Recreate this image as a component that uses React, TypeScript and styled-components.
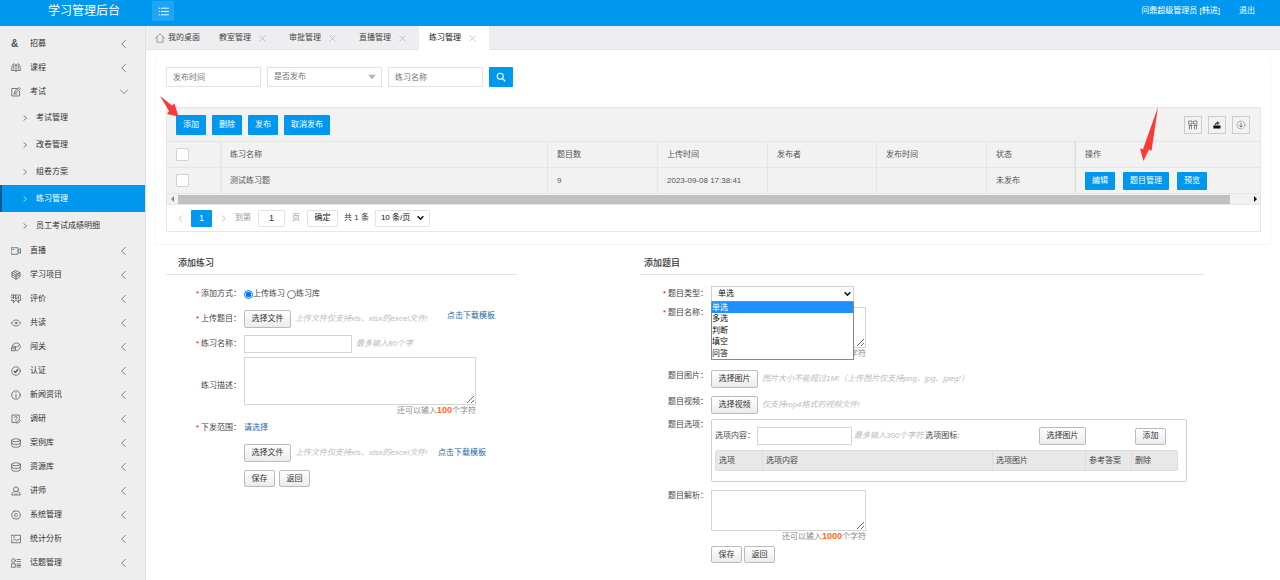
import React from "react";
import styled, { createGlobalStyle, css } from "styled-components";

const BLUE = "#0098ee";

const GlobalStyle = createGlobalStyle`
  *, *::before, *::after { box-sizing: border-box; }
  body {
    margin: 0;
    background: #fff;
    color: #444;
    font: 8px/12px "Liberation Sans", "Noto Sans CJK SC", sans-serif;
  }
  button, input, select, textarea {
    font: inherit;
    color: inherit;
    margin: 0;
    border-radius: 0;
  }
  button { cursor: pointer; white-space: nowrap; }
  a { text-decoration: none; color: inherit; }
  svg { display: block; flex: none; }
`;

/* ---------- Shell ---------- */

const Header = styled.header`
  display: flex;
  align-items: center;
  height: 26px;
  padding: 0 25px 4px 0;
  background: ${BLUE};
  color: #fff;
`;

const Brand = styled.h1`
  width: 152px;
  margin: 0;
  padding-left: 16px;
  text-align: center;
  font-size: 12px;
  line-height: 20px;
  font-weight: 400;
`;

const MenuToggle = styled.button`
  display: flex;
  align-items: center;
  justify-content: center;
  width: 22px;
  height: 20px;
  padding: 0;
  border: 0;
  border-radius: 1px;
  background: #1fa5f3;
  color: #fff;
`;

const UserLinks = styled.nav`
  display: flex;
  gap: 19px;
  margin-left: auto;
`;

const Body = styled.div`
  display: flex;
  align-items: stretch;
  min-height: calc(100vh - 26px);
`;

const Sidebar = styled.nav`
  flex: none;
  width: 146px;
  padding-top: 6px;
  background: #eee;
  border-right: 1px solid #e0e0e0;
  color: #333;
`;

const MenuItem = styled.a`
  display: flex;
  align-items: center;
  height: 24px;
  padding: 0 17px 0 11px;
`;

const MenuIcon = styled.span`
  display: flex;
  align-items: center;
  width: 19px;
  color: #555;
`;

const Ampersand = styled.span`
  font-size: 10px;
  font-weight: 700;
`;

const MenuText = styled.span`
  flex: 1;
`;

const SubItem = styled.a<{ $active?: boolean }>`
  display: flex;
  align-items: center;
  gap: 8px;
  height: 27px;
  padding-left: 20px;
  border-left: 2px solid transparent;
  ${(p) =>
    p.$active &&
    css`
      background: ${BLUE};
      border-left-color: #0a5c94;
      color: #fff;
    `}
`;

const Main = styled.main`
  flex: 1;
  min-width: 0;
`;

const TabBar = styled.nav`
  display: flex;
  height: 24px;
  background: #eeeef0;
  border-bottom: 1px solid #e4e4e4;
`;

const Tab = styled.a<{ $active?: boolean; $home?: boolean }>`
  display: flex;
  align-items: center;
  gap: ${(p) => (p.$home ? 3 : 8)}px;
  width: ${(p) => (p.$home ? 63 : 70)}px;
  height: 24px;
  padding-left: ${(p) => (p.$home ? 9 : 10)}px;
  white-space: nowrap;
  ${(p) =>
    p.$active &&
    css`
      background: #fff;
      color: #111;
    `}
`;

/* ---------- List card ---------- */

const Card = styled.section`
  margin: 9px 9px 0;
  padding: 7px 9px 12px 10px;
  border: 1px solid #f6f6f6;
  border-top-color: #fff;
`;

const Filters = styled.form`
  display: flex;
  gap: 6px;
  margin-bottom: 20px;
`;

const FilterInput = styled.input`
  width: 95px;
  height: 20px;
  padding: 0 6px;
  border: 1px solid #e3e3e3;
  &::placeholder { color: #757575; }
`;

const SelectWrap = styled.span`
  position: relative;
  display: inline-flex;
  & > svg {
    position: absolute;
    right: 6px;
    top: 50%;
    transform: translateY(-50%);
    pointer-events: none;
  }
`;

const FilterSelect = styled.select`
  appearance: none;
  width: 115px;
  height: 20px;
  padding: 0 6px;
  border: 1px solid #e3e3e3;
  background: #fff;
  color: #757575;
`;

const PrimaryButton = styled.button<{ $slim?: boolean }>`
  display: inline-flex;
  align-items: center;
  justify-content: center;
  height: ${(p) => (p.$slim ? 18 : 20)}px;
  padding: 0 7px;
  border: 0;
  border-radius: 1px;
  background: ${BLUE};
  color: #fff;
`;

const GridBox = styled.div`
  border: 1px solid #e6e6e6;
`;

const Toolbar = styled.div`
  display: flex;
  align-items: center;
  gap: 6px;
  height: 33px;
  padding: 0 10px 0 9px;
  background: #f2f2f2;
`;

const ToolIcons = styled.div`
  display: flex;
  gap: 6px;
  margin-left: auto;
`;

const ToolButton = styled.button`
  display: flex;
  align-items: center;
  justify-content: center;
  width: 18px;
  height: 18px;
  padding: 0;
  border: 1px solid #ccc;
  background: transparent;
  color: #555;
`;

const Anchor = styled.span`
  position: relative;
  display: inline-flex;
`;

const Pointer = styled.svg<{ $right: number; $bottom: number }>`
  position: absolute;
  right: ${(p) => p.$right}px;
  bottom: ${(p) => p.$bottom}px;
  overflow: visible;
  pointer-events: none;
`;

const DataTable = styled.table`
  width: 100%;
  table-layout: fixed;
  border-collapse: separate;
  border-spacing: 0;
  background: #f2f2f2;
  color: #555;
  th, td {
    height: 26px;
    padding: 0 9px;
    border-top: 1px solid #e6e6e6;
    border-right: 1px solid #e6e6e6;
    font-weight: 400;
    text-align: left;
    white-space: nowrap;
  }
  th:last-child, td:last-child { border-right: 0; box-shadow: -2px 0 2px rgba(0, 0, 0, 0.05); }
  th:first-child, td:first-child { box-shadow: 1px 0 2px rgba(0, 0, 0, 0.05); }
`;

const CheckBox = styled.input`
  appearance: none;
  display: block;
  width: 13px;
  height: 13px;
  border: 1px solid #d2d2d2;
  border-radius: 1px;
  background: #fff;
`;

const RowActions = styled.div`
  display: flex;
  gap: 8px;
`;

const ScrollTrack = styled.div`
  display: flex;
  align-items: center;
  height: 12px;
  padding: 0 3px 0 4px;
  background: #f1f1f1;
  border-top: 1px solid #e6e6e6;
  border-bottom: 1px solid #e6e6e6;
`;

const ScrollRail = styled.div`
  flex: 1;
  height: 9px;
  margin: 0 24px 0 4px;
  background: #c1c1c1;
`;

const Pager = styled.div`
  display: flex;
  align-items: center;
  height: 26px;
  padding-left: 10px;
  color: #333;
`;

const PageArrow = styled.button`
  display: flex;
  align-items: center;
  justify-content: center;
  width: 6px;
  height: 17px;
  padding: 0;
  border: 0;
  background: none;
  color: #aaa;
`;

const PageNumber = styled.button`
  width: 21px;
  height: 17px;
  margin: 0 8px;
  padding: 0;
  border: 0;
  border-radius: 1px;
  background: ${BLUE};
  color: #fff;
  font-size: 9px;
`;

const JumpLabel = styled.label`
  display: flex;
  align-items: center;
  gap: 7px;
  margin-left: 9px;
  color: #999;
`;

const JumpInput = styled.input`
  width: 27px;
  height: 17px;
  padding: 0;
  border: 1px solid #e2e2e2;
  border-radius: 1px;
  color: #333;
  font-size: 9px;
  text-align: center;
`;

const JumpButton = styled.button`
  width: 31px;
  height: 17px;
  margin: 0 6px 0 7px;
  padding: 0;
  border: 1px solid #e2e2e2;
  border-radius: 1px;
  background: #fff;
  color: #111;
`;

const PageSize = styled.select`
  appearance: none;
  width: 55px;
  height: 17px;
  margin-left: 6px;
  padding: 0 5px;
  border: 1px solid #e2e2e2;
  border-radius: 1px;
  background: #fff;
  color: #111;
`;

/* ---------- Forms ---------- */

const Forms = styled.div`
  display: grid;
  grid-template-columns: minmax(0, 351fr) minmax(0, 564fr);
  column-gap: 123px;
  padding: 0 76px 8px 20px;
`;

const SectionTitle = styled.h2<{ $indent: number }>`
  margin: 0;
  padding: 12px 0 5px ${(p) => p.$indent}px;
  border-bottom: 1px solid #e3e3e3;
  font-size: 9px;
  line-height: 12px;
  font-weight: 500;
  color: #333;
`;

const FormBody = styled.form`
  display: flex;
  flex-direction: column;
  padding-top: 11px;
`;

const Row = styled.div<{ $gap?: number; $top?: boolean; $label: number }>`
  display: grid;
  grid-template-columns: ${(p) => p.$label}px minmax(0, 1fr);
  column-gap: 3px;
  align-items: ${(p) => (p.$top ? "start" : "center")};
  margin-top: ${(p) => p.$gap ?? 0}px;
`;

const labelStyle = css`
  text-align: right;
  white-space: nowrap;
`;

const Label = styled.label`
  ${labelStyle}
`;

const LabelText = styled.span`
  ${labelStyle}
`;

const Star = styled.span`
  margin-right: 2px;
  color: #f00;
`;

const Field = styled.div<{ $gap?: number }>`
  display: flex;
  align-items: center;
  gap: ${(p) => p.$gap ?? 4}px;
  min-height: 16px;
  white-space: nowrap;
`;

const Choice = styled.label`
  display: inline-flex;
  align-items: center;
`;

const Radio = styled.input`
  width: 9px;
  height: 9px;
  accent-color: #0075ff;
`;

const GreyButton = styled.button<{ $small?: boolean }>`
  flex: none;
  width: ${(p) => (p.$small ? 31 : 47)}px;
  height: ${(p) => (p.$small ? 17 : 18)}px;
  padding: 0;
  border: 1px solid #bbb;
  border-radius: 2px;
  background: linear-gradient(#fff, #ebebeb);
  color: #333;
`;

const Hint = styled.em<{ $w?: number }>`
  color: #bbb;
  width: ${(p) => (p.$w ? `${p.$w}px` : "auto")};
  white-space: nowrap;
`;

const TextLink = styled.a<{ $raised?: boolean }>`
  color: #1c66a3;
  align-self: ${(p) => (p.$raised ? "flex-start" : "center")};
`;

const TextInput = styled.input<{ $w: number }>`
  width: ${(p) => p.$w}px;
  height: 18px;
  padding: 0 4px;
  border: 1px solid #d5d5d5;
`;

const CountedArea = styled.div<{ $w: number }>`
  width: ${(p) => p.$w}px;
`;

const TextArea = styled.textarea<{ $h: number }>`
  display: block;
  width: 100%;
  height: ${(p) => p.$h}px;
  padding: 4px;
  border: 1px solid #d5d5d5;
`;

const Counter = styled.p`
  height: 10px;
  margin: 0;
  text-align: right;
  line-height: 10px;
  color: #888;
  b { color: #ff6a1a; font-size: 9px; font-weight: 700; }
`;

const TypeBox = styled.div`
  position: relative;
  width: 143px;
`;

const TypeSelect = styled.select`
  appearance: none;
  display: block;
  width: 100%;
  height: 16px;
  padding: 0 6px;
  border: 1px solid #d0d0d0;
  border-bottom-color: #888;
  background: #fff;
  color: #111;
`;

const TypeArrow = styled.svg`
  position: absolute;
  right: 3px;
  top: 5px;
  pointer-events: none;
`;

const OptionList = styled.ul`
  position: absolute;
  z-index: 2;
  top: 100%;
  left: 0;
  display: grid;
  grid-auto-rows: 1fr;
  width: 100%;
  height: 58px;
  margin: 0;
  padding: 0;
  list-style: none;
  border: 1px solid #888;
  border-top: 0;
  background: #fff;
  color: #111;
`;

const Option = styled.li<{ $on?: boolean }>`
  line-height: 11px;
  background: ${(p) => (p.$on ? "#1e90ff" : "transparent")};
  color: ${(p) => (p.$on ? "#fff" : "inherit")};
`;

const OptionPanel = styled.div`
  margin-right: 17px;
  padding: 7px 8px 10px 3px;
  border: 1px solid #d0d0d0;
  border-radius: 2px;
`;

const OptionRow = styled.div`
  display: flex;
  align-items: center;
  gap: 2px;
  padding-right: 12px;
  margin-bottom: 5px;
  white-space: nowrap;
`;

const PictureGroup = styled.div`
  display: flex;
  align-items: center;
  gap: 49px;
  margin-left: auto;
`;

const OptionTable = styled.table`
  width: 100%;
  table-layout: fixed;
  border-collapse: separate;
  border-spacing: 0;
  background: #e8e8e8;
  border: 1px solid #ddd;
  border-radius: 2px;
  th {
    height: 19px;
    padding: 0 3px;
    text-align: left;
    font-weight: 400;
    white-space: nowrap;
  }
  th + th { border-left: 1px solid #ddd; }
`;

/* ---------- Icons ---------- */

type IconProps = { children: React.ReactNode; size?: number; width?: number };

const Icon = ({ children, size = 10, width = 1.5 }: IconProps) => (
  <svg
    width={size}
    height={size}
    viewBox="0 0 20 20"
    fill="none"
    stroke="currentColor"
    strokeWidth={width}
    strokeLinecap="round"
    strokeLinejoin="round"
    aria-hidden="true"
  >
    {children}
  </svg>
);

const database = (
  <Icon>
    <ellipse cx="10" cy="4.5" rx="8.5" ry="3" />
    <path d="M1.5 4.5v11c0 1.700 3.800 3 8.500 3s8.500-1.300 8.500-3v-11M1.500 10c0 1.700 3.800 3 8.500 3s8.500-1.300 8.500-3" />
  </Icon>
);

const icons: Record<string, React.ReactNode> = {
  book: (
    <Icon>
      <path d="M10 5c-.5-2-2-3-4-3S2.500 3.500 2.500 5L1 15h7c1 0 2 .5 2 2 0-1.500 1-2 2-2h7L17.500 5c0-1.500-1.500-3-3.500-3s-3.500 1-4 3zM10 5v10M5.500 5v7M14.500 5v7" />
    </Icon>
  ),
  edit: (
    <Icon>
      <path d="M13 3H1.500v15H17V9M5 14h7M7 11l1-3 8.500-7L19 3.500 10 11z" />
    </Icon>
  ),
  video: (
    <Icon>
      <path d="M1 3.500h13v13H1zM14 9l5-4v10l-5-4M3.500 7h2" />
    </Icon>
  ),
  cube: (
    <Icon>
      <path d="M10 1.500l8 4v8.500l-8 4.500-8-4.500V5.500zM2 5.500l8 4.500 8-4.500M10 10v8.500M6 3.500l8 4.500M2 9.500l8 4.500 8-4.500" />
    </Icon>
  ),
  review: (
    <Icon>
      <path d="M1 2h18v11h-5l2 5-5-5H9l-5 5 2-5H1zM5 2v7M9 3v7h3V6M15 5v5M3 7h3" />
    </Icon>
  ),
  eye: (
    <Icon>
      <path d="M1 10c2.500-4 5.500-6 9-6s6.500 2 9 6c-2.500 4-5.500 6-9 6s-6.500-2-9-6z" />
      <circle cx="10" cy="10" r="1.800" />
    </Icon>
  ),
  game: (
    <Icon>
      <path d="M2.500 10C2 5 6 2 10.500 2S18.500 5 18.500 9.500 15 16 11 17.500M6 8l5 2 5-2.500M2 10.500h7v7H2zM4 13.500h3" />
    </Icon>
  ),
  check: (
    <Icon>
      <circle cx="10" cy="10" r="8.500" />
      <path d="M6.500 10.500l2.500 2.500 4.500-6" strokeWidth="2.600" />
    </Icon>
  ),
  info: (
    <Icon>
      <circle cx="10" cy="10" r="8.500" />
      <path d="M10 9v6M10 5.500v.5" />
    </Icon>
  ),
  survey: (
    <Icon>
      <path d="M16.500 9V2H2v15h8M7 7c0-3 5-3 5 0 0 2-2.500 2-2.500 4M9.500 13.500v.2M12 15l5-4 2 2-4.500 5H12z" />
    </Icon>
  ),
  person: (
    <Icon>
      <circle cx="10" cy="6.500" r="5" />
      <path d="M7 11c-3 1-5.500 3-5.500 7h17c0-4-2.500-6-5.500-7M8 15l2 2 2-2" />
    </Icon>
  ),
  gear: (
    <Icon>
      <path d="M10 1.200l2.500 1.600 3-.3.900 2.800 2.400 1.900-1 2.800 1 2.800-2.400 1.900-.9 2.800-3-.3L10 18.800l-2.500-1.600-3 .3-.9-2.800-2.400-1.900 1-2.800-1-2.800 2.400-1.900.9-2.800 3 .3z" />
      <path d="M13 8.500c-1-2.500-5.500-2.500-6 1.500s4.500 4.500 6 1.500" />
    </Icon>
  ),
  image: (
    <Icon>
      <path d="M1 2.500h18v15H1zM3 14l4-4 4 3.500 6-3.500M5 6h2" />
    </Icon>
  ),
  topics: (
    <Icon>
      <circle cx="5" cy="5" r="3.700" />
      <path d="M1.500 11.500h7v7h-7zM12 3h7M12 7h7M12 12h7M12 15h7M12 18h7" />
    </Icon>
  ),
};

const ChevronLeft = () => (
  <Icon size={8} width={1.7}>
    <path d="M14 1L4 10l10 9" stroke="#555" />
  </Icon>
);
const ChevronRight = () => (
  <Icon size={6} width={2}>
    <path d="M6 2l9 8-9 8" />
  </Icon>
);
const ChevronDown = () => (
  <Icon size={8} width={1.7}>
    <path d="M1 5l9 9 9-9" stroke="#555" />
  </Icon>
);
const Close = () => (
  <Icon size={7} width={1.8}>
    <path d="M2 2l16 16M18 2L2 18" stroke="#aaa" />
  </Icon>
);
const BoldChevron = () => (
  <svg width="7" height="6" viewBox="0 0 7 6" fill="none" stroke="#111" strokeWidth="1.6" aria-hidden="true">
    <path d="M0.700 1.300l2.800 2.900 2.800-2.900" />
  </svg>
);

/* ---------- Data ---------- */

type Entry = { icon: string; text: string };

const topMenu: Entry[] = [
  { icon: "amp", text: "招募" },
  { icon: "book", text: "课程" },
  { icon: "edit", text: "考试" },
];

const examMenu = ["考试管理", "改卷管理", "组卷方案", "练习管理", "员工考试成绩明细"];

const restMenu: Entry[] = [
  { icon: "video", text: "直播" },
  { icon: "cube", text: "学习项目" },
  { icon: "review", text: "评价" },
  { icon: "eye", text: "共读" },
  { icon: "game", text: "闯关" },
  { icon: "check", text: "认证" },
  { icon: "info", text: "新闻资讯" },
  { icon: "survey", text: "调研" },
  { icon: "database", text: "案例库" },
  { icon: "database", text: "资源库" },
  { icon: "person", text: "讲师" },
  { icon: "gear", text: "系统管理" },
  { icon: "image", text: "统计分析" },
  { icon: "topics", text: "话题管理" },
];

const tabs = ["教室管理", "审批管理", "直播管理", "练习管理"];
const questionTypes = ["单选", "多选", "判断", "填空", "问答"];

const MenuEntry = ({ icon, text, open }: Entry & { open?: boolean }) => (
  <MenuItem href="#">
    <MenuIcon>
      {icon === "amp" ? <Ampersand>&amp;</Ampersand> : icon === "database" ? database : icons[icon]}
    </MenuIcon>
    <MenuText>{text}</MenuText>
    {open ? <ChevronDown /> : <ChevronLeft />}
  </MenuItem>
);

/* ---------- Page sections ---------- */

const PracticeList = () => (
  <Card>
    <Filters>
      <FilterInput placeholder="发布时间" aria-label="发布时间" />
      <SelectWrap>
        <FilterSelect aria-label="是否发布">
          <option>是否发布</option>
        </FilterSelect>
        <svg width="8" height="5" viewBox="0 0 8 5" aria-hidden="true">
          <path d="M0 0h8L4 5z" fill="#b5b5b5" />
        </svg>
      </SelectWrap>
      <FilterInput placeholder="练习名称" aria-label="练习名称" />
      <PrimaryButton type="button" aria-label="搜索">
        <Icon size={10} width={2.2}>
          <circle cx="8.500" cy="8.500" r="6" />
          <path d="M13 13l5 5" />
        </Icon>
      </PrimaryButton>
    </Filters>

    <GridBox>
      <Toolbar>
        <Anchor>
          <PrimaryButton type="button">添加</PrimaryButton>
          <Pointer $right={27} $bottom={18} width="19" height="21" viewBox="0 0 19 21" aria-hidden="true">
            <path d="M0 0L12 9.500l2.500-2L18.500 20.500 7 18l2-3z" fill="#f93a37" />
          </Pointer>
        </Anchor>
        <PrimaryButton type="button">删除</PrimaryButton>
        <PrimaryButton type="button">发布</PrimaryButton>
        <PrimaryButton type="button">取消发布</PrimaryButton>
        <ToolIcons>
          <ToolButton type="button" aria-label="筛选列">
            <Icon size={10} width={1.3}>
              <path d="M2 2h6v6H2zM12 2h6v6h-6zM2 11h6M12 11h6M3 11v7M7 11v7M13 11v7M17 11v7" />
            </Icon>
          </ToolButton>
          <ToolButton type="button" aria-label="导出">
            <Icon size={8} width={1.4}>
              <path d="M2 12h16v6H2z" fill="#111" stroke="#111" />
              <path d="M5 10c0-4 3-6 6-6V1l5 4.500-5 3.500V7c-2 0-4 1-6 3z" fill="#555" stroke="#333" />
            </Icon>
          </ToolButton>
          <ToolButton type="button" aria-label="下载">
            <Icon size={10} width={1.4}>
              <circle cx="10" cy="10" r="8" stroke="#999" />
              <path d="M10 6v8M7 11l3 3 3-3" />
            </Icon>
          </ToolButton>
        </ToolIcons>
      </Toolbar>

      <DataTable>
        <colgroup>
          <col style={{ width: 54 }} />
          <col />
          <col style={{ width: 110 }} />
          <col style={{ width: 110 }} />
          <col style={{ width: 109 }} />
          <col style={{ width: 110 }} />
          <col style={{ width: 89 }} />
          <col style={{ width: 184 }} />
        </colgroup>
        <thead>
          <tr>
            <th><CheckBox type="checkbox" aria-label="全选" /></th>
            <th>练习名称</th>
            <th>题目数</th>
            <th>上传时间</th>
            <th>发布者</th>
            <th>发布时间</th>
            <th>状态</th>
            <th>操作</th>
          </tr>
        </thead>
        <tbody>
          <tr>
            <td><CheckBox type="checkbox" aria-label="选择测试练习题" /></td>
            <td>测试练习题</td>
            <td>9</td>
            <td>2023-09-08 17:38:41</td>
            <td />
            <td />
            <td>未发布</td>
            <td>
              <RowActions>
                <PrimaryButton type="button" $slim>编辑</PrimaryButton>
                <Anchor>
                  <PrimaryButton type="button" $slim>题目管理</PrimaryButton>
                  <Pointer $right={11} $bottom={29} width="18" height="54" viewBox="0 0 18 54" aria-hidden="true">
                    <path d="M18 0L11.500 44l-2.500-1.500L3.500 54 0 41.500l3 .8z" fill="#f93a37" />
                  </Pointer>
                </Anchor>
                <PrimaryButton type="button" $slim>预览</PrimaryButton>
              </RowActions>
            </td>
          </tr>
        </tbody>
      </DataTable>

      <ScrollTrack>
        <svg width="3" height="6" viewBox="0 0 3 6" aria-hidden="true"><path d="M3 0v6L0 3z" fill="#888" /></svg>
        <ScrollRail />
        <svg width="3" height="6" viewBox="0 0 3 6" aria-hidden="true"><path d="M0 0v6l3-3z" fill="#111" /></svg>
      </ScrollTrack>

      <Pager>
        <PageArrow type="button" aria-label="上一页">
          <Icon size={7} width={2}><path d="M14 2L5 10l9 8" /></Icon>
        </PageArrow>
        <PageNumber type="button">1</PageNumber>
        <PageArrow type="button" aria-label="下一页">
          <Icon size={7} width={2}><path d="M6 2l9 8-9 8" /></Icon>
        </PageArrow>
        <JumpLabel>
          到第
          <JumpInput defaultValue="1" />
          页
        </JumpLabel>
        <JumpButton type="button">确定</JumpButton>
        <span>共 1 条</span>
        <SelectWrap>
          <PageSize aria-label="每页条数">
            <option>10 条/页</option>
          </PageSize>
          <BoldChevron />
        </SelectWrap>
      </Pager>
    </GridBox>
  </Card>
);

const AddPractice = () => (
  <section>
    <SectionTitle $indent={12}>添加练习</SectionTitle>
    <FormBody>
      <Row $label={75}>
        <LabelText><Star>*</Star>添加方式：</LabelText>
        <Field $gap={2}>
          <Choice><Radio type="radio" name="mode" defaultChecked />上传练习</Choice>
          <Choice><Radio type="radio" name="mode" />练习库</Choice>
        </Field>
      </Row>
      <Row $label={75} $gap={8}>
        <LabelText><Star>*</Star>上传题目：</LabelText>
        <Field>
          <GreyButton type="button">选择文件</GreyButton>
          <Hint $w={148}>上传文件仅支持xls、xlsx的excel文件!</Hint>
          <TextLink href="#" $raised>点击下载模板</TextLink>
        </Field>
      </Row>
      <Row $label={75} $gap={7}>
        <Label htmlFor="practice-name"><Star>*</Star>练习名称：</Label>
        <Field>
          <TextInput id="practice-name" $w={108} />
          <Hint>最多输入80个字</Hint>
        </Field>
      </Row>
      <Row $label={75} $gap={4}>
        <Label htmlFor="practice-desc">练习描述：</Label>
        <CountedArea $w={232}>
          <TextArea id="practice-desc" $h={48} />
          <Counter>还可以输入<b>100</b>个字符</Counter>
        </CountedArea>
      </Row>
      <Row $label={75} $gap={5}>
        <LabelText><Star>*</Star>下发范围：</LabelText>
        <Field><TextLink href="#">请选择</TextLink></Field>
      </Row>
      <Row $label={75} $gap={8}>
        <span />
        <Field>
          <GreyButton type="button">选择文件</GreyButton>
          <Hint $w={139}>上传文件仅支持xls、xlsx的excel文件!</Hint>
          <TextLink href="#">点击下载模板</TextLink>
        </Field>
      </Row>
      <Row $label={75} $gap={8}>
        <span />
        <Field>
          <GreyButton type="button" $small>保存</GreyButton>
          <GreyButton type="button" $small>返回</GreyButton>
        </Field>
      </Row>
    </FormBody>
  </section>
);

const AddQuestion = () => (
  <section>
    <SectionTitle $indent={4}>添加题目</SectionTitle>
    <FormBody>
      <Row $label={68}>
        <Label htmlFor="question-type"><Star>*</Star>题目类型：</Label>
        <TypeBox>
          <TypeSelect id="question-type">
            {questionTypes.map((t) => <option key={t}>{t}</option>)}
          </TypeSelect>
          <TypeArrow width="7" height="6" viewBox="0 0 7 6" fill="none" stroke="#111" strokeWidth="1.6" aria-hidden="true">
            <path d="M0.700 1.300l2.800 2.900 2.800-2.900" />
          </TypeArrow>
          <OptionList>
            {questionTypes.map((t, i) => <Option key={t} $on={i === 0}>{t}</Option>)}
          </OptionList>
        </TypeBox>
      </Row>
      <Row $label={68} $gap={5} $top>
        <Label htmlFor="question-name"><Star>*</Star>题目名称：</Label>
        <CountedArea $w={155}>
          <TextArea id="question-name" $h={41} />
          <Counter>还可以输入<b>1000</b>个字符</Counter>
        </CountedArea>
      </Row>
      <Row $label={68} $gap={12} $top>
        <LabelText>题目图片：</LabelText>
        <Field>
          <GreyButton type="button">选择图片</GreyButton>
          <Hint>图片大小不能超过1M!（上传图片仅支持png、jpg、jpeg!）</Hint>
        </Field>
      </Row>
      <Row $label={68} $gap={8} $top>
        <LabelText>题目视频：</LabelText>
        <Field>
          <GreyButton type="button">选择视频</GreyButton>
          <Hint>仅支持mp4格式的视频文件!</Hint>
        </Field>
      </Row>
      <Row $label={68} $gap={5} $top>
        <LabelText>题目选项：</LabelText>
        <OptionPanel>
          <OptionRow>
            <label htmlFor="option-text">选项内容：</label>
            <TextInput id="option-text" $w={95} />
            <Hint>最多输入300个字符</Hint>
            <span>选项图标:</span>
            <PictureGroup>
              <GreyButton type="button">选择图片</GreyButton>
              <GreyButton type="button" $small>添加</GreyButton>
            </PictureGroup>
          </OptionRow>
          <OptionTable>
            <colgroup>
              <col style={{ width: 46 }} />
              <col />
              <col style={{ width: 93 }} />
              <col style={{ width: 46 }} />
              <col style={{ width: 46 }} />
            </colgroup>
            <thead>
              <tr>
                <th>选项</th>
                <th>选项内容</th>
                <th>选项图片</th>
                <th>参考答案</th>
                <th>删除</th>
              </tr>
            </thead>
          </OptionTable>
        </OptionPanel>
      </Row>
      <Row $label={68} $gap={8} $top>
        <Label htmlFor="question-note">题目解析：</Label>
        <CountedArea $w={155}>
          <TextArea id="question-note" $h={41} />
          <Counter>还可以输入<b>1000</b>个字符</Counter>
        </CountedArea>
      </Row>
      <Row $label={68} $gap={5}>
        <span />
        <Field $gap={2}>
          <GreyButton type="button" $small>保存</GreyButton>
          <GreyButton type="button" $small>返回</GreyButton>
        </Field>
      </Row>
    </FormBody>
  </section>
);

export default function App() {
  return (
    <>
      <GlobalStyle />
      <Header>
        <Brand>学习管理后台</Brand>
        <MenuToggle type="button" aria-label="收起菜单">
          <Icon size={11} width={1.7}>
            <path d="M2 4h1M6 4h13M2 10h1M6 10h13M2 16h1M6 16h13" />
          </Icon>
        </MenuToggle>
        <UserLinks>
          <a href="#">问鼎超级管理员 [韩进]</a>
          <a href="#">退出</a>
        </UserLinks>
      </Header>
      <Body>
        <Sidebar>
          {topMenu.map((m) => <MenuEntry key={m.text} {...m} open={m.text === "考试"} />)}
          {examMenu.map((t) => (
            <SubItem key={t} href="#" $active={t === "练习管理"}>
              <ChevronRight />
              {t}
            </SubItem>
          ))}
          {restMenu.map((m) => <MenuEntry key={m.text} {...m} />)}
        </Sidebar>
        <Main>
          <TabBar>
            <Tab href="#" $home>
              <Icon size={10} width={1.4}>
                <path d="M1 10l9-8.500 9 8.500M4 8v10.500h12V8" stroke="#777" />
              </Icon>
              我的桌面
            </Tab>
            {tabs.map((t) => (
              <Tab key={t} href="#" $active={t === "练习管理"}>
                {t}
                <Close />
              </Tab>
            ))}
          </TabBar>
          <PracticeList />
          <Forms>
            <AddPractice />
            <AddQuestion />
          </Forms>
        </Main>
      </Body>
    </>
  );
}
